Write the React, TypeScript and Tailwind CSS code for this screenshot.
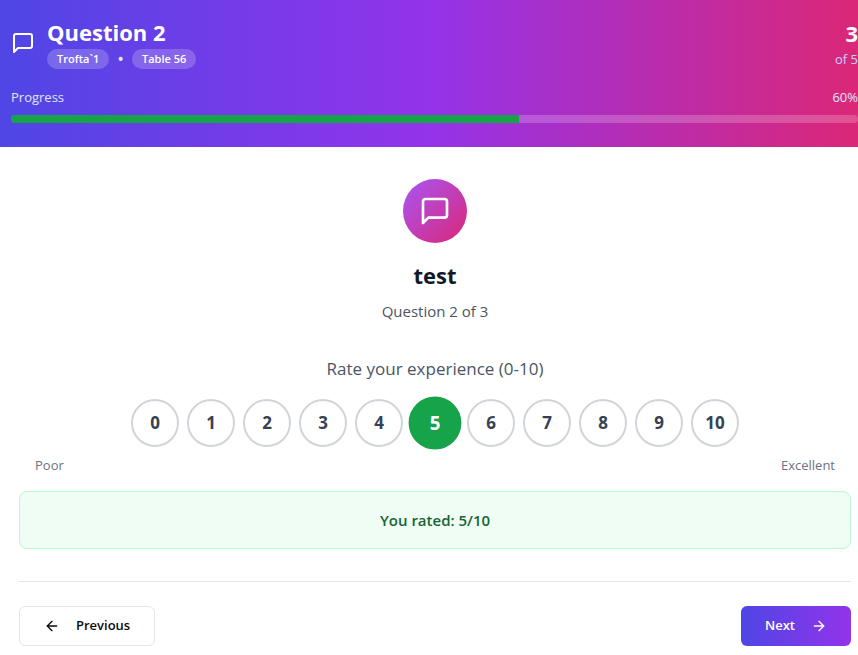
import { useState } from "react";
import { ArrowLeft, ArrowRight } from "lucide-react";

const SCORES = [0, 1, 2, 3, 4, 5, 6, 7, 8, 9, 10];

function MessageIcon({ className }: { className: string }) {
  return (
    <svg
      viewBox="0 0 24 24"
      fill="none"
      stroke="currentColor"
      strokeWidth="2"
      strokeLinecap="round"
      strokeLinejoin="round"
      aria-hidden="true"
      className={className}
    >
      <path d="M21 15a2 2 0 0 1-2 2H7l-4 4V5a2 2 0 0 1 2-2h14a2 2 0 0 1 2 2z" />
    </svg>
  );
}

function Tag({ children }: { children: string }) {
  return (
    <span className="rounded-full bg-white/20 px-2.5 py-0.5 text-[11px] leading-4 font-semibold text-white">
      {children}
    </span>
  );
}

function Header() {
  return (
    <header className="bg-[linear-gradient(to_right,#4f46e5,#9333ea,#db2777)] pt-4 pb-6 pl-[11px] text-white">
      <div className="flex items-center justify-between">
        <div className="flex items-center gap-3">
          <MessageIcon className="size-6" />
          <div>
            <h1 className="pb-px text-[22px] leading-8 font-bold">Question 2</h1>
            <div className="flex items-center gap-2">
              <Tag>Trofta`1</Tag>
              <span className="text-lg leading-5 text-indigo-100">•</span>
              <Tag>Table 56</Tag>
            </div>
          </div>
        </div>
        <div className="text-right">
          <div className="pt-px text-[22px] leading-8 font-bold">3</div>
          <div className="text-[13px] leading-5 text-indigo-200">of 5</div>
        </div>
      </div>
      <div className="mt-[18px] flex justify-between text-[13px] leading-5 text-indigo-100">
        <span>Progress</span>
        <span>60%</span>
      </div>
      <div
        role="progressbar"
        aria-label="Progress"
        aria-valuenow={60}
        aria-valuemin={0}
        aria-valuemax={100}
        className="mt-2 h-2 overflow-hidden rounded-full bg-white/20"
      >
        <div className="h-full w-3/5 bg-[#16a34a]" />
      </div>
    </header>
  );
}

export default function App() {
  const [score, setScore] = useState(5);

  return (
    <div className="min-h-screen bg-white font-['Segoe_UI','Open_Sans',sans-serif]">
      <Header />
      <main className="pt-8 pr-[7px] pb-[9px] pl-[19px] text-center">
        <div className="mx-auto flex size-16 items-center justify-center rounded-full bg-[linear-gradient(to_bottom_right,#a855f7,#db2777)] text-white">
          <MessageIcon className="size-8" />
        </div>
        <h2 className="mt-4 text-[22px] leading-8 font-bold text-[#111827]">test</h2>
        <p className="mt-2 text-[15px] leading-6 text-[#4b5563]">Question 2 of 3</p>

        <p className="mt-8 text-[17px] leading-7 text-[#4b5563]">Rate your experience (0-10)</p>
        <div className="mt-4 flex flex-wrap justify-center gap-2">
          {SCORES.map((n) => (
            <button
              key={n}
              type="button"
              aria-pressed={n === score}
              onClick={() => setScore(n)}
              className={
                n === score
                  ? "size-12 scale-110 rounded-full border-2 border-[#16a34a] bg-[#16a34a] text-[17px] font-bold text-white"
                  : "size-12 rounded-full border-2 border-[#d1d5db] bg-white text-[17px] font-bold text-[#374151]"
              }
            >
              {n}
            </button>
          ))}
        </div>
        <div className="mt-2 flex justify-between px-4 text-[13px] leading-5 text-[#6b7280]">
          <span>Poor</span>
          <span>Excellent</span>
        </div>

        <div className="mt-4 rounded-lg border border-[#bbf7d0] bg-[#f0fdf4] p-4">
          <p className="text-[15px] leading-6 font-semibold text-[#166534]">You rated: {score}/10</p>
        </div>

        <div className="mt-8 flex justify-between border-t border-[#e5e5e5] pt-6 text-[13px] font-semibold">
          <button
            type="button"
            className="flex h-10 items-center gap-4 rounded-md border border-[#e5e5e5] bg-white px-6 text-[#0a0a0a]"
          >
            <ArrowLeft className="size-4" />
            Previous
          </button>
          <button
            type="button"
            className="flex h-10 items-center gap-4 rounded-md bg-[linear-gradient(to_right,#4f46e5,#9333ea)] px-6 text-white"
          >
            Next
            <ArrowRight className="size-4" />
          </button>
        </div>
      </main>
    </div>
  );
}
